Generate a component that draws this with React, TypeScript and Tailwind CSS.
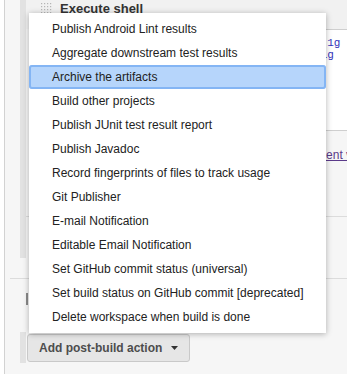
import React from 'react';

const actions = [
  'Publish Android Lint results',
  'Aggregate downstream test results',
  'Archive the artifacts',
  'Build other projects',
  'Publish JUnit test result report',
  'Publish Javadoc',
  'Record fingerprints of files to track usage',
  'Git Publisher',
  'E-mail Notification',
  'Editable Email Notification',
  'Set GitHub commit status (universal)',
  'Set build status on GitHub commit [deprecated]',
  'Delete workspace when build is done',
];

const DragHandle = () => {
  const dots = [];
  for (let r = 0; r < 4; r++) {
    for (let c = 0; c < 4; c++) {
      dots.push(<rect key={`${r}-${c}`} x={c * 3 + 1} y={r * 3 + 1} width="1.2" height="1.2" fill="#b5b5b5" />);
    }
  }
  return (
    <svg width="12" height="12" viewBox="0 0 12 12" className="mt-[1px] shrink-0">
      {dots}
    </svg>
  );
};

const App = () => {
  return (
    <div className="relative h-[374px] w-[347px] overflow-hidden bg-white font-['Liberation_Sans',Arial,sans-serif] text-[12px] text-[#222]">
      <div className="ml-[4px] flex h-full flex-col border-l border-[#d2d2d2] bg-[#f6f6f6]">
        {/* build step behind the menu */}
        <div className="ml-[15px] flex h-[258px] border-l-[6px] border-[#e2e2e2]">
          <div className="flex min-w-0 flex-1 flex-col">
            <div className="flex h-[29px] items-start gap-[8px] bg-[#f1f1f1] pl-[14px] pt-[1px]">
              <DragHandle />
              <span className="text-[13px] font-bold leading-[16px] text-[#333]">Execute shell</span>
            </div>
            <div className="ml-[20px] h-[102px] overflow-hidden whitespace-pre border-y border-[#cfcfcf] bg-white pl-[4px] pt-[7px] font-['Liberation_Mono',monospace] text-[11px] leading-[12px] text-[#3333bb]">
              <div>export GRADLE_OPTS=-Xmx2048m -XX:MaxHeap  1g</div>
              <div>export JAVA_OPTS=-Xmx2048m -XX:MaxMemory 1g</div>
            </div>
            <div className="mt-[17px] whitespace-nowrap pl-[124px] leading-[14px]">
              <a className="text-[#5b3a8a] underline">See the list of available environment variables</a>
            </div>
            <div className="mt-[54px] border-b border-[#dcdcdc]" />
          </div>
        </div>

        {/* post-build section */}
        <div className="ml-[5px] mt-[20px] flex flex-col border-t border-[#dcdcdc] pt-[14px]">
          <div className="ml-[16px] h-[12px] w-[2px] bg-[#8a8a8a]" />
          <div className="ml-[10px] mt-[27px] flex h-[31px] border-l-[6px] border-[#e2e2e2] pt-[2px]">
            <button className="ml-[1px] flex h-[28px] items-center gap-[9px] rounded-[3px] border border-[#c9c9c9] bg-[#e6e6e6] pl-[11px] pr-[11px] text-[12px] font-bold text-[#4d4d4d]">
              Add post-build action
              <svg width="7" height="4" viewBox="0 0 7 4">
                <path d="M0 0h7L3.5 4z" fill="#333" />
              </svg>
            </button>
          </div>
        </div>
      </div>

      {/* dropdown menu */}
      <ul className="absolute left-[29px] top-[13px] w-[297px] bg-white py-[4px] shadow-[0_1px_6px_rgba(0,0,0,0.3)]">
        {actions.map((a, i) => (
          <li
            key={a}
            className={
              i === 2
                ? 'flex h-[24px] items-center rounded-[3px] bg-[#b6d5fb] pl-[23px] shadow-[inset_0_0_0_2px_#84b5f4]'
                : 'flex h-[24px] items-center pl-[23px]'
            }
          >
            {a}
          </li>
        ))}
      </ul>
    </div>
  );
};

export default App;
